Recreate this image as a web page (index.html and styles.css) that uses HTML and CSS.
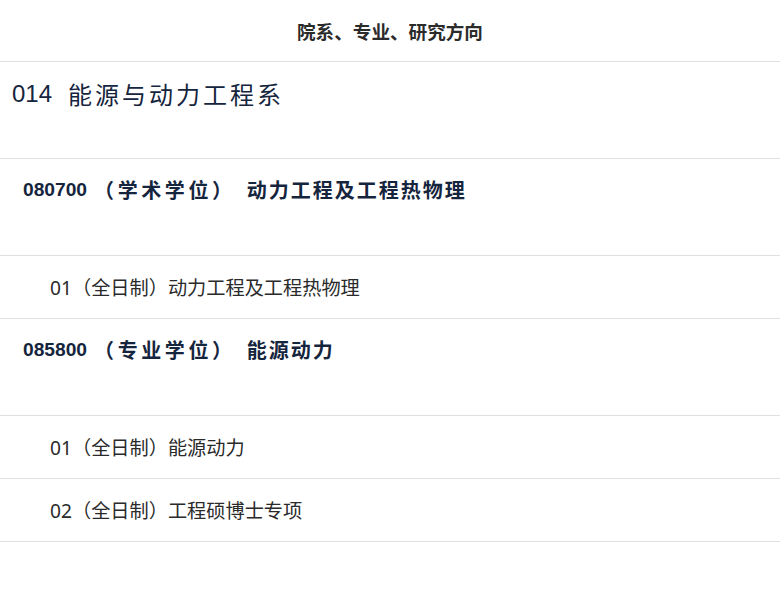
FILE: index.html
```html
<!DOCTYPE html>
<html lang="zh-CN">
<head>
<meta charset="utf-8">
<title>院系、专业、研究方向</title>
<link rel="stylesheet" href="styles.css">
</head>
<body>
<div class="table">
  <div class="head">院系、专业、研究方向</div>
  <div class="row dept"><span class="num">014</span><span class="dept-name">能源与动力工程系</span></div>
  <div class="row major"><span class="num">080700</span><span class="type">（学术学位）</span><span class="name">动力工程及工程热物理</span></div>
  <div class="row dir">01（全日制）动力工程及工程热物理</div>
  <div class="row major"><span class="num">085800</span><span class="type">（专业学位）</span><span class="name">能源动力</span></div>
  <div class="row dir">01（全日制）能源动力</div>
  <div class="row dir">02（全日制）工程硕博士专项</div>
</div>
</body>
</html>
```
FILE: styles.css
```css
html, body {
  margin: 0;
  padding: 0;
  background: #ffffff;
}

body {
  font-family: "Noto Sans", "Noto Sans CJK SC", sans-serif;
  color: #333333;
}

.table {
  display: flex;
  flex-direction: column;
}

.head {
  height: 61px;
  display: flex;
  align-items: center;
  justify-content: center;
  font-family: "Noto Sans CJK SC", sans-serif;
  font-weight: 700;
  font-size: 18.6px;
  color: #2b2b2b;
  border-bottom: 1px solid #e0e0e4;
}

.row {
  border-bottom: 1px solid #e0e0e4;
  box-sizing: border-box;
}

.dept {
  height: 97px;
  padding: 15px 0 0 12px;
  display: flex;
  align-items: center;
  align-self: stretch;
  align-items: flex-start;
  line-height: 34px;
  color: #15253d;
  font-size: 24px;
}

.dept .num {
  font-family: "Liberation Sans", Arial, sans-serif;
}

.dept-name {
  font-family: "Noto Sans CJK SC", sans-serif;
  letter-spacing: 3px;
  margin-left: 16px;
}

.major {
  height: 97px;
  padding: 16px 0 0 23px;
  display: flex;
  align-items: flex-start;
  line-height: 30px;
  color: #15253d;
  font-weight: 700;
}

.major .num {
  font-family: "Liberation Sans", Arial, sans-serif;
  font-size: 19.2px;
}

.major .type,
.major .name {
  font-family: "Noto Sans CJK SC", sans-serif;
  font-size: 20px;
}

.major .type {
  margin-left: 7px;
  letter-spacing: 3.6px;
}

.major .name {
  margin-left: 11px;
  letter-spacing: 2px;
}

.dir {
  height: 63px;
  padding-left: 50px;
  display: flex;
  align-items: center;
  font-size: 19.2px;
  color: #2a2a2a;
}
```
